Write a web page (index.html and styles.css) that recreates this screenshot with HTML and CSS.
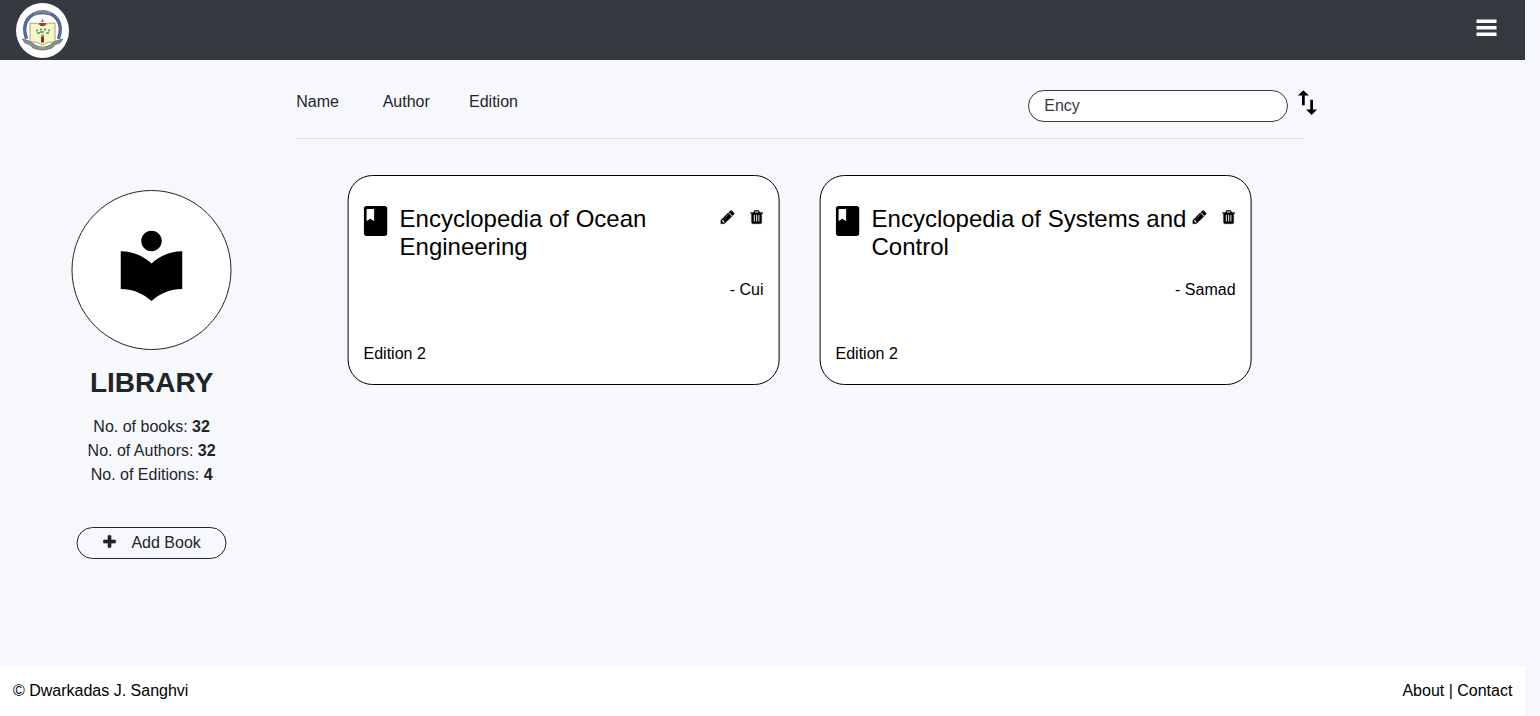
FILE: index.html
```html
<!DOCTYPE html>
<html lang="en">
<head>
<meta charset="utf-8">
<title>Library</title>
<link rel="stylesheet" href="styles.css">
</head>
<body>
<svg class="sprite" aria-hidden="true">
  <symbol id="book" viewBox="4 2 16 20"><path d="M18 2H6c-1.1 0-2 .9-2 2v16c0 1.1.9 2 2 2h12c1.1 0 2-.9 2-2V4c0-1.1-.9-2-2-2zM6 4h5v8l-2.500-1.500L6 12V4z"/></symbol>
  <symbol id="pencil" viewBox="0 0 1792 1792"><path d="M491 1536l91-91-235-235-91 91v107h128v128h107zm523-928q0-22-22-22-10 0-17 7l-542 542q-7 7-7 17 0 22 22 22 10 0 17-7l542-542q7-7 7-17zm-54-192l416 416-832 832h-416v-416zm683 96q0 53-37 90l-166 166-416-416 166-165q36-38 90-38 53 0 91 38l235 234q37 39 37 91z"/></symbol>
  <symbol id="trash" viewBox="0 0 1792 1792"><path d="M704 1376v-704q0-14-9-23t-23-9h-64q-14 0-23 9t-9 23v704q0 14 9 23t23 9h64q14 0 23-9t9-23zm256 0v-704q0-14-9-23t-23-9h-64q-14 0-23 9t-9 23v704q0 14 9 23t23 9h64q14 0 23-9t9-23zm256 0v-704q0-14-9-23t-23-9h-64q-14 0-23 9t-9 23v704q0 14 9 23t23 9h64q14 0 23-9t9-23zm-544-992h448l-48-117q-7-9-17-11h-317q-10 2-17 11zm928 32v64q0 14-9 23t-23 9h-96v948q0 83-47 143.500t-113 60.500h-832q-66 0-113-58.500t-47-141.500v-952h-96q-14 0-23-9t-9-23v-64q0-14 9-23t23-9h309l70-167q15-37 54-63t79-26h320q40 0 79 26t54 63l70 167h309q14 0 23 9t9 23z"/></symbol>
</svg>
<div class="page">
  <header class="navbar">
    <div class="brand">
      <svg class="crest" viewBox="0 0 53 55">
        <path d="M10.500 36C5 20 13 9.500 26.500 9.500S48 20 42.500 36" fill="none" stroke="#4a619b" stroke-width="3.400"/>
        <path d="M10.500 36C5 20 13 9.500 26.500 9.500S48 20 42.500 36" fill="none" stroke="#8d9dc4" stroke-width=".8" stroke-dasharray="1 1.500"/>
        <path d="M18 10.500q8.500-4 17 0" fill="none" stroke="#7d858c" stroke-width="3"/>
        <path d="M14 20q7-1 12.500 3 5.500-4 12.500-3v19q-7-1-12.500 3-5.500-4-12.500-3z" fill="#f7f6c4" stroke="#8a965c" stroke-width=".8"/>
        <path d="M22.500 20h8l-2 3h-4z" fill="#8e4532"/>
        <path d="M26.500 15.500l1.500 3.500h-3z" fill="#d9541e"/>
        <path d="M20 27.500h2m2-1h2m2 0h2m2 1h2m-13 2.500h3m6 0h3m-9-1h4" stroke="#369578" stroke-width="1.700"/>
        <path d="M26.500 31.500v2" stroke="#d58a30" stroke-width="3"/>
        <path d="M26.500 33.500v6" stroke="#6b3b25" stroke-width="3"/>
        <path d="M6 36q8 1 13 6 7.500 4 15 0 5-5 13-6l-3 4q-5 1-8 5-9.500 4-19 0-3-4-8-5z" fill="#89908f" stroke="#646d70" stroke-width=".7"/>
        <path d="M23 45h7" stroke="#9db53d" stroke-width="1.500"/>
      </svg>
    </div>
    <svg class="menu" viewBox="0 0 21 18"><path d="M.5.500h20V4H.5zM.5 7h20v3.400H.5zM.5 13.500h20V17H.5z"/></svg>
  </header>
  <main class="main">
    <aside class="sidebar">
      <div class="avatar"><svg class="reader" viewBox="0 0 24 24"><path d="M12 11.550C9.640 9.350 6.480 8 3 8v11c3.480 0 6.640 1.350 9 3.550 2.360-2.190 5.520-3.550 9-3.550V8c-3.480 0-6.640 1.350-9 3.550zM12 8c1.660 0 3-1.340 3-3s-1.340-3-3-3-3 1.340-3 3 1.340 3 3 3z"/></svg></div>
      <h1 class="title">LIBRARY</h1>
      <div class="stats">
        <div>No. of books: <b>32</b></div>
        <div>No. of Authors: <b>32</b></div>
        <div>No. of Editions: <b>4</b></div>
      </div>
      <button class="add"><svg class="icon" viewBox="0 0 1792 1792"><path d="M1600 736v192q0 40-28 68t-68 28h-416v416q0 40-28 68t-68 28h-192q-40 0-68-28t-28-68v-416h-416q-40 0-68-28t-28-68v-192q0-40 28-68t68-28h416v-416q0-40 28-68t68-28h192q40 0 68 28t28 68v416h416q40 0 68 28t28 68z"/></svg><span>Add Book</span></button>
    </aside>
    <section class="content">
      <div class="toolbar">
        <nav class="sorts"><span class="sort">Name</span><span class="sort">Author</span><span class="sort">Edition</span></nav>
        <input class="search" type="text" value="Ency">
        <svg class="swap" viewBox="0 0 24 24"><path d="M16 17.010V10h-2v7.010h-3L15 21l4-3.990h-3zM9 3L5 6.990h3V14h2V6.990h3L9 3z"/></svg>
      </div>
      <div class="cards">
        <article class="card">
          <div class="card-head">
            <svg class="book"><use href="#book"/></svg>
            <h2 class="name">Encyclopedia of Ocean Engineering</h2>
            <div class="actions"><svg class="icon"><use href="#pencil"/></svg><svg class="icon"><use href="#trash"/></svg></div>
          </div>
          <div class="author">- Cui</div>
          <div class="edition">Edition 2</div>
        </article>
        <article class="card">
          <div class="card-head">
            <svg class="book"><use href="#book"/></svg>
            <h2 class="name">Encyclopedia of Systems and Control</h2>
            <div class="actions"><svg class="icon"><use href="#pencil"/></svg><svg class="icon"><use href="#trash"/></svg></div>
          </div>
          <div class="author">- Samad</div>
          <div class="edition">Edition 2</div>
        </article>
      </div>
    </section>
  </main>
  <footer class="footer"><span>© Dwarkadas J. Sanghvi</span><span>About | Contact</span></footer>
</div>
</body>
</html>
```
FILE: styles.css
```css
* { box-sizing: border-box; }
body { margin: 0; background: #f7f8fc; color: #212529; font: 16px/24px "Liberation Sans", Arial, sans-serif; overflow: hidden; }
svg { display: block; flex: none; }
.sprite { display: none; }
.page { width: 1525px; height: 716px; display: flex; flex-direction: column; }
.navbar { height: 60px; flex: none; background: #343a40; display: flex; justify-content: space-between; align-items: flex-start; padding: 3px 28px 0 16px; }
.brand { width: 53px; height: 55px; border-radius: 50%; background: #fff; }
.crest { width: 53px; height: 55px; }
.menu { width: 21px; height: 18px; margin-top: 16px; fill: #fff; }
.main { flex: 1; display: flex; }
.sidebar { width: 296.250px; padding: 130px 0 0 7px; display: flex; flex-direction: column; align-items: center; }
.avatar { width: 160px; height: 160px; border: 1px solid #212529; border-radius: 50%; background: #fff; display: flex; justify-content: center; padding-top: 33px; transform: translateX(-.5px); }
.reader { width: 82px; height: 82px; fill: #000; }
.title { margin: 16px 0 0; font-size: 28px; line-height: 34px; font-weight: 700; }
.stats { margin-top: 15px; text-align: center; }
.add { margin-top: 40px; width: 150px; height: 32px; border: 1px solid #212529; border-radius: 16px; background: transparent; color: inherit; font: inherit; display: flex; align-items: center; justify-content: center; gap: 14px; padding: 0; transform: translateX(-.5px); }
.add .icon { margin-top: -2px; }
.icon { width: 16px; height: 16px; fill: currentColor; stroke: currentColor; stroke-width: 25px; }
.content { flex: 1; }
.toolbar { width: 1007px; height: 79px; border-bottom: 1px solid #dcdee2; display: flex; align-items: flex-start; }
.sorts { flex: 1; display: flex; padding-top: 30px; }
.sort { width: 86.400px; }
.search { width: 260px; height: 32px; margin-top: 30px; border: 1px solid #343a40; border-radius: 16px; background: #fff; padding: 0 15px; font: inherit; color: #343a40; outline: none; }
.swap { width: 33px; height: 33px; margin: 26px -21px 0 3px; fill: #000; }
.cards { display: grid; grid-template-columns: 432px 432px; gap: 40px; padding: 36px 0 0 51.500px; color: #000; }
.card { height: 210px; border: 1px solid #000; border-radius: 25px; background: #fff; padding: 29px 14.800px 0 15.200px; display: flex; flex-direction: column; transform: translateX(-.4px); }
.card-head { display: flex; height: 57px; }
.book { width: 24px; height: 30px; margin-top: 1px; }
.name { flex: 1; margin: 0 0 0 12px; font-size: 24px; line-height: 28px; font-weight: 400; }
.actions { display: flex; gap: 13px; margin: 4px -1.500px 0 -10px; }
.author { text-align: right; margin-top: 16px; }
.edition { margin-top: 40px; }
.footer { height: 50px; flex: none; background: #fff; color: #000; display: flex; align-items: center; justify-content: space-between; padding: 0 12.600px 0 13px; }
```
